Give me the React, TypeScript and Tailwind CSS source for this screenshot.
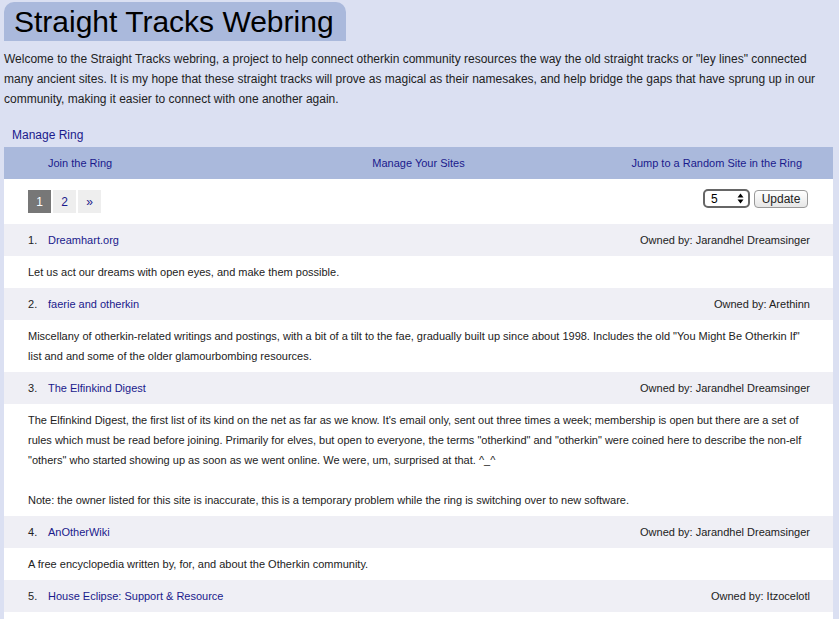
import React from 'react';

type Site = {
  name: string;
  owner: string;
  desc: string[];
};

const sites: Site[] = [
  {
    name: 'Dreamhart.org',
    owner: 'Jarandhel Dreamsinger',
    desc: ['Let us act our dreams with open eyes, and make them possible.'],
  },
  {
    name: 'faerie and otherkin',
    owner: 'Arethinn',
    desc: [
      'Miscellany of otherkin-related writings and postings, with a bit of a tilt to the fae, gradually built up since about 1998. Includes the old "You Might Be Otherkin If" list and and some of the older glamourbombing resources.',
    ],
  },
  {
    name: 'The Elfinkind Digest',
    owner: 'Jarandhel Dreamsinger',
    desc: [
      'The Elfinkind Digest, the first list of its kind on the net as far as we know. It\'s email only, sent out three times a week; membership is open but there are a set of rules which must be read before joining. Primarily for elves, but open to everyone, the terms "otherkind" and "otherkin" were coined here to describe the non-elf "others" who started showing up as soon as we went online. We were, um, surprised at that. ^_^',
      'Note: the owner listed for this site is inaccurate, this is a temporary problem while the ring is switching over to new software.',
    ],
  },
  {
    name: 'AnOtherWiki',
    owner: 'Jarandhel Dreamsinger',
    desc: ['A free encyclopedia written by, for, and about the Otherkin community.'],
  },
  {
    name: 'House Eclipse: Support & Resource',
    owner: 'Itzocelotl',
    desc: [],
  },
];

function SiteRow({ site, index }: { site: Site; index: number }) {
  return (
    <>
      <div className="flex items-center justify-between h-8 bg-[#efeff5] pl-6 pr-[23px] text-[11px] text-[#222]">
        <div className="flex items-center">
          <span className="w-5">{index + 1}.</span>
          <a href="#" className="text-[#1a1a8c]">
            {site.name}
          </a>
        </div>
        <span>Owned by: {site.owner}</span>
      </div>
      <div className="bg-white pl-6 pr-[23px] py-1.5 min-h-8 text-[11px] leading-5 text-[#222]">
        {site.desc.map((d, i) => (
          <React.Fragment key={i}>
            {i > 0 && <div className="h-5" />}
            <p>{d}</p>
          </React.Fragment>
        ))}
      </div>
    </>
  );
}

export default function App() {
  return (
    <div
      className="min-h-[619px] bg-[#dbe0f2] pl-1 pr-1.5 pt-0.5 overflow-hidden"
      style={{ fontFamily: '"Liberation Sans", Arial, sans-serif' }}
    >
      <div className="inline-block bg-[#aab9dc] rounded-t-[10px] pl-2.5 pr-3 h-[39px] leading-[39px] text-[30px] text-black">
        Straight Tracks Webring
      </div>
      <p className="text-[12px] leading-5 text-[#222] mt-2 pr-1">
        Welcome to the Straight Tracks webring, a project to help connect otherkin community resources the way the old
        straight tracks or "ley lines" connected many ancient sites. It is my hope that these straight tracks will prove
        as magical as their namesakes, and help bridge the gaps that have sprung up in our community, making it easier to
        connect with one another again.
      </p>

      <div className="mt-[17px] pl-2 pb-[3px] text-[12px] text-[#1a1a8c]">
        <a href="#">Manage Ring</a>
      </div>

      <div className="grid grid-cols-3 items-center h-8 bg-[#aab9dc] text-[11px] text-[#1a1a8c]">
        <a href="#" className="text-left pl-11">
          Join the Ring
        </a>
        <a href="#" className="text-center">
          Manage Your Sites
        </a>
        <a href="#" className="text-right pr-[31px]">
          Jump to a Random Site in the Ring
        </a>
      </div>

      <div className="bg-white">
        <div className="flex items-center justify-between h-[45px] pl-6 pr-[25px]">
          <div className="flex gap-0.5 text-[12px]">
            <span className="w-[23px] h-[23px] flex items-center justify-center bg-[#777] text-white">1</span>
            <a href="#" className="w-[23px] h-[23px] flex items-center justify-center bg-[#eee] text-[#1a1a8c]">
              2
            </a>
            <a href="#" className="w-[23px] h-[23px] flex items-center justify-center bg-[#eee] text-[#1a1a8c]">
              »
            </a>
          </div>
          <div className="flex items-center gap-1 mb-1.5">
            <div className="flex items-center justify-between w-[47px] h-[19px] rounded-[5px] border-2 border-[#666] bg-white pl-1.5 pr-1 text-[12px] text-black">
              <span>5</span>
              <svg width="7" height="11" viewBox="0 0 7 11" className="fill-black">
                <path d="M3.5 0.5 L6.5 4.5 L0.5 4.5 Z" />
                <path d="M3.5 10.5 L6.5 6.5 L0.5 6.5 Z" />
              </svg>
            </div>
            <button className="h-[18px] w-[54px] rounded-[4px] border border-[#999] bg-gradient-to-b from-white to-[#e6e6e6] text-[12px] leading-none text-[#222]">
              Update
            </button>
          </div>
        </div>

        {sites.map((s, i) => (
          <SiteRow key={i} site={s} index={i} />
        ))}
      </div>
    </div>
  );
}
